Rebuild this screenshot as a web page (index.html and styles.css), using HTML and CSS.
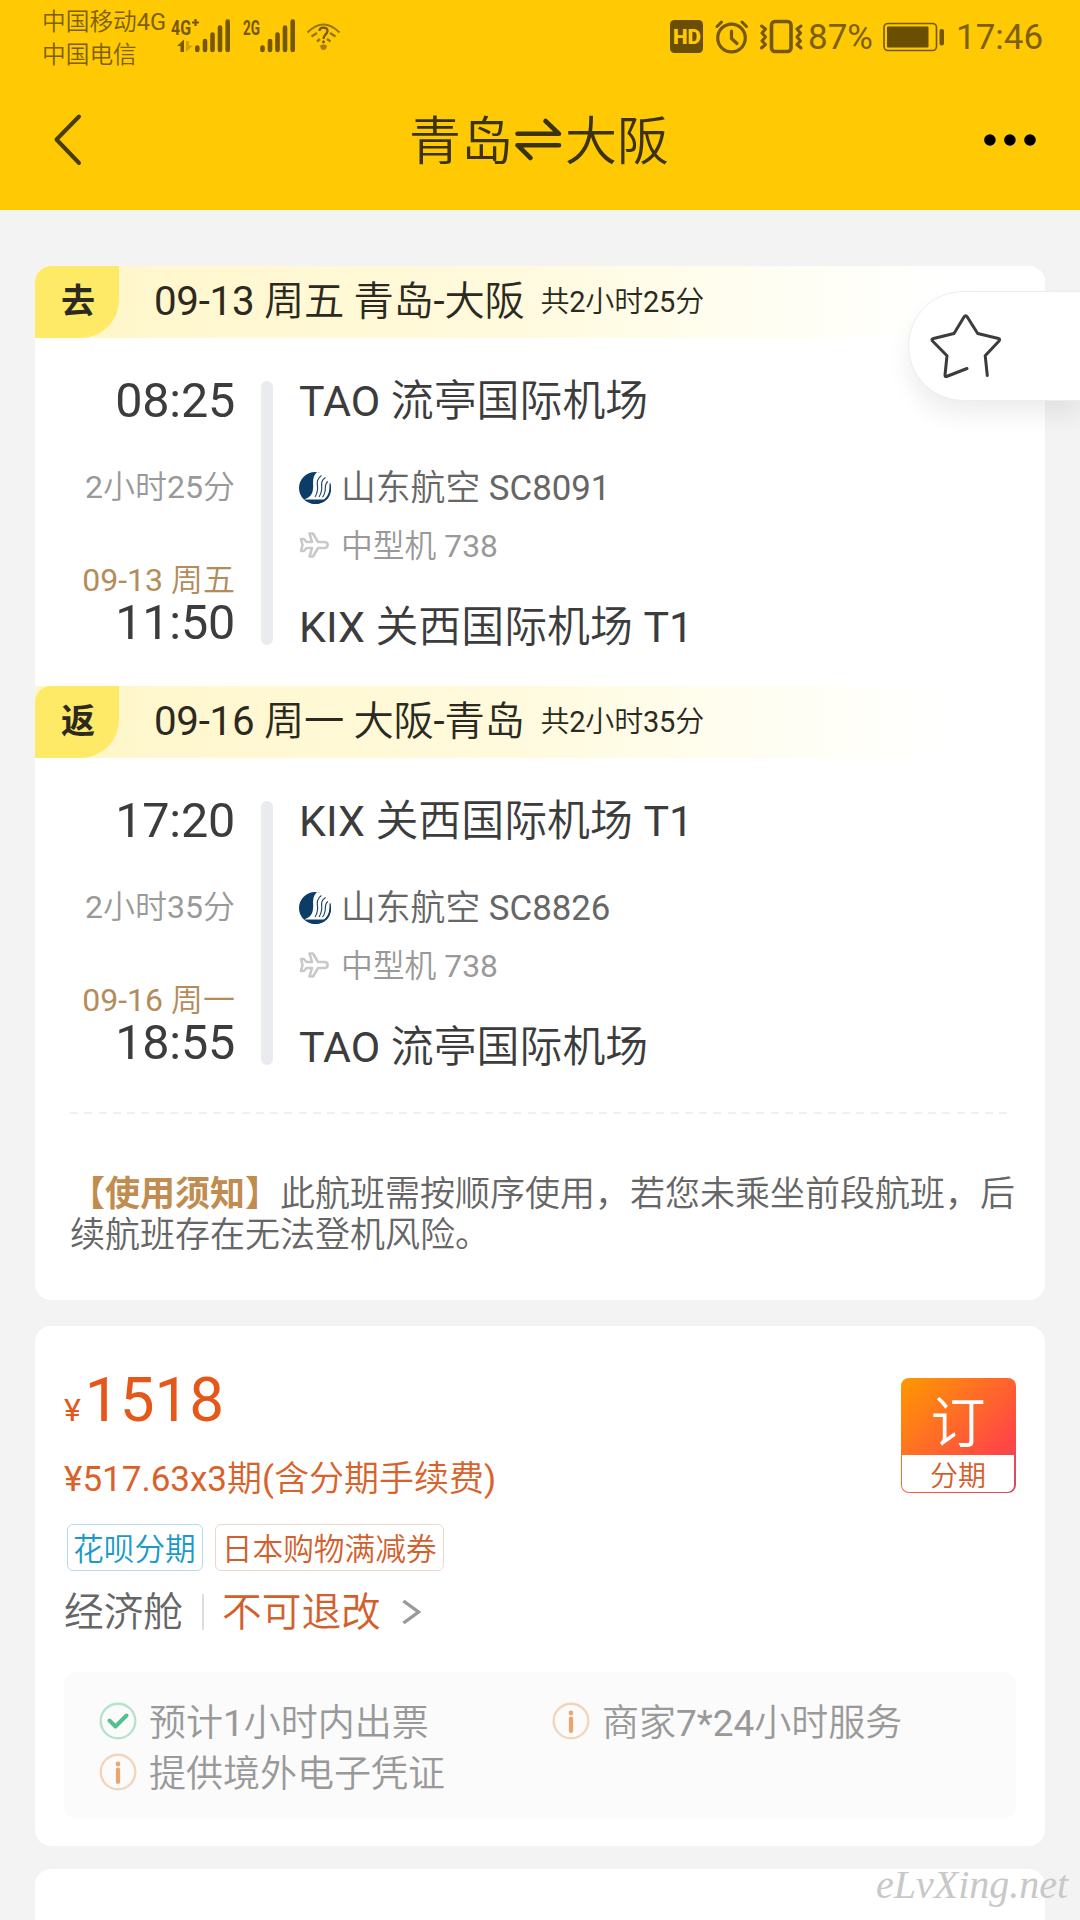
FILE: index.html
```html
<!DOCTYPE html>
<html lang="zh-CN">
<head>
<meta charset="utf-8">
<title>青岛⇌大阪</title>
<link rel="stylesheet" href="styles.css">
</head>
<body>
<svg class="defs" width="0" height="0" aria-hidden="true">
  <symbol id="airline" viewBox="0 0 32 32">
    <circle cx="16" cy="16" r="16" fill="#0d3c66"/>
    <path d="M18 0 C12 6 15 12 14 17 C13.500 23 10 26 5 27.500 L25 27.500 C29 24 31 20 30.500 12 L32 8 L27 2 Z" fill="#fff"/>
    <path d="M7 28 L25 28 C29 25 31 21 31 11 C33.500 19 31 26 25.500 29.500 C20 33 12 33 7 28 Z" fill="#0d3c66"/>
    <path d="M22.500 3.500 C15.500 8 19.500 14 18.500 18 C18 21.500 17.500 23 16 25 M26.500 5.500 C20.500 9 23.500 14 22.500 18.500 C22 21.500 21.500 23 20 25 M29 9.500 C25 12 27 16 26 19.500 C25.500 22 25 23.500 23.500 25" fill="none" stroke="#24496d" stroke-width="1.200"/>
  </symbol>
  <symbol id="plane" viewBox="0 0 30 26">
    <path d="M10.500 1.500 L14 1.500 L19 10 L26 10 C29.500 10.500 29.500 15.500 26 16 L19 16 L14 24.500 L10.500 24.500 L13 16 L7.500 16 L5 19 L2 19 L3.500 13 L2 7 L5 7 L7.500 10 L13 10 Z" fill="none" stroke="#c9c9c9" stroke-width="2.600" stroke-linejoin="round"/>
  </symbol>
  <symbol id="info" viewBox="0 0 38 38">
    <circle cx="19" cy="19" r="17.300" fill="none" stroke="#f3d5bb" stroke-width="2.400"/>
    <circle cx="19" cy="11" r="2.400" fill="#e5a878"/>
    <path d="M19 16.500 V29" stroke="#eaa46c" stroke-width="4.200" stroke-linecap="round"/>
  </symbol>
  <symbol id="check" viewBox="0 0 38 38">
    <circle cx="19" cy="19" r="17.300" fill="none" stroke="#b5e3cc" stroke-width="2.400"/>
    <path d="M10.500 18.500 L16.500 24.500 L27.500 13.500" fill="none" stroke="#55c08f" stroke-width="4" stroke-linecap="round" stroke-linejoin="round"/>
  </symbol>
</svg>
<div class="page">
  <header class="top">
    <div class="status">
      <div class="carriers"><span>中国移动4G</span><span>中国电信</span></div>
      <svg class="signals" width="176" height="40" viewBox="168 16 176 40">
        <g fill="#765704">
          <text class="net" x="171" y="34.500" textLength="20" lengthAdjust="spacingAndGlyphs">4G</text>
          <path d="M192 22.500 h7 M195.500 19 v7" stroke="#765704" stroke-width="2.200"/>
          <text class="net" x="243" y="34.500" textLength="17" lengthAdjust="spacingAndGlyphs">2G</text>
          <path d="M177 46 L184 39.500 V52 H180.500 V46 Z"/>
          <path d="M186 41 H189 V45.500 H193 L186 52 Z" opacity=".35"/>
        </g>
        <g stroke="#765704" stroke-width="4.600" stroke-linecap="round">
          <path d="M197.300 47.500V50M205 41V50M212.500 34.500V50M220 27.500V50M227.700 21.500V50"/>
          <path d="M262.500 47.500V50M270 41V50M277.500 34.500V50M285 27.500V50M292.700 21.500V50"/>
        </g>
        <g fill="none" stroke="#765704">
          <path d="M307.500 32.500 Q323.500 16.500 339.500 32.500" stroke-width="2" opacity=".75"/>
          <path d="M311.500 36.500 L317 33 M335.500 36.500 L330 33 M317 41.500 L320 39 M330.500 41.500 L327 39" stroke-width="2.400" opacity=".75"/>
          <path d="M319.500 31 C319.500 26.500 327.500 26.500 327.500 31 C327.500 34.500 323.500 34.500 323.500 39" stroke-width="2.300"/>
          <circle cx="323.500" cy="42" r="1.400" fill="#765704" stroke="none"/>
          <path d="M320 45.500 Q323.500 43.500 327 45.500 Q326.500 50 323.500 50 Q320.500 50 320 45.500Z" fill="#a87e05" stroke="none"/>
        </g>
      </svg>
      <svg class="modes" width="134" height="40" viewBox="669 16 134 40">
        <rect x="670" y="20" width="33" height="33" rx="4.500" fill="#6a4f02"/>
        <text class="hd" x="673" y="44" textLength="28" lengthAdjust="spacingAndGlyphs">HD</text>
        <g fill="none" stroke="#765704" stroke-linecap="round">
          <circle cx="731.500" cy="38" r="13.800" stroke-width="3.200"/>
          <path d="M731.500 31 V38.500 L737 43.500" stroke-width="3.200"/>
          <path d="M717 26.500 L721.500 22 M746.500 26.500 L742 22" stroke-width="3"/>
          <rect x="771.500" y="21.500" width="19.500" height="30" rx="3.500" stroke-width="3.600"/>
          <path d="M761.500 26 L765.500 29 L762 33 L765.500 37 L762 41 L765.500 44.500 L761.500 48 M801 26 L797 29 L800.500 33 L797 37 L800.500 41 L797 44.500 L801 48" stroke-width="3" stroke-linejoin="round"/>
        </g>
      </svg>
      <span class="percent">87%</span>
      <svg class="battery" width="62" height="30" viewBox="883.500 21.500 62 30">
        <rect x="884.500" y="23" width="52.500" height="27" rx="4" fill="none" stroke="#765704" stroke-width="1.600"/>
        <rect x="887.500" y="26" width="41.500" height="21" rx="1" fill="#6a4f02"/>
        <rect x="940" y="28.500" width="4.500" height="16.500" rx="2" fill="#765704"/>
      </svg>
      <span class="clock">17:46</span>
    </div>
    <div class="nav">
      <svg width="40" height="60" viewBox="50 110 40 60"><path d="M80 116.500 L57.500 139.500 L80 163" fill="none" stroke="#4a3c08" stroke-width="4" stroke-linecap="round" stroke-linejoin="round"/></svg>
      <h1 class="title"><span>青岛</span><svg width="52" height="52" viewBox="515 114 52 52"><path d="M519.500 133.800 H561 L547.500 121 M561 145.200 H519.500 L532.500 158" fill="none" stroke="#3a3210" stroke-width="4.600" stroke-linecap="round" stroke-linejoin="round"/></svg><span>大阪</span></h1>
      <svg width="54" height="14" viewBox="983.500 132 54 14"><g fill="#000"><circle cx="990.400" cy="139" r="5.800"/><circle cx="1010.400" cy="139" r="5.800"/><circle cx="1030.500" cy="139" r="5.800"/></g></svg>
    </div>
  </header>

  <main class="cards">
    <section class="card trip">
      <div class="leg-head"><b class="badge">去</b><span class="route">09-13 周五 青岛-大阪</span><span class="total">共2小时25分</span></div>
      <div class="leg">
        <div class="when"><div class="time">08:25</div><div class="dur">2小时25分</div><div class="date">09-13 周五</div><div class="time">11:50</div></div>
        <div class="rail"></div>
        <div class="where">
          <div class="port">TAO 流亭国际机场</div>
          <div class="airline"><svg width="32" height="32"><use href="#airline"/></svg><span>山东航空 SC8091</span></div>
          <div class="craft"><svg width="30" height="26"><use href="#plane"/></svg><span>中型机 738</span></div>
          <div class="port">KIX 关西国际机场 T1</div>
        </div>
      </div>
      <div class="leg-head"><b class="badge">返</b><span class="route">09-16 周一 大阪-青岛</span><span class="total">共2小时35分</span></div>
      <div class="leg">
        <div class="when"><div class="time">17:20</div><div class="dur">2小时35分</div><div class="date">09-16 周一</div><div class="time">18:55</div></div>
        <div class="rail"></div>
        <div class="where">
          <div class="port">KIX 关西国际机场 T1</div>
          <div class="airline"><svg width="32" height="32"><use href="#airline"/></svg><span>山东航空 SC8826</span></div>
          <div class="craft"><svg width="30" height="26"><use href="#plane"/></svg><span>中型机 738</span></div>
          <div class="port">TAO 流亭国际机场</div>
        </div>
      </div>
      <div class="divider"></div>
      <p class="notice"><b>【使用须知】</b>此航班需按顺序使用，若您未乘坐前段航班，后续航班存在无法登机风险。</p>
    </section>

    <section class="card fare">
      <div class="offer">
        <div class="details">
          <div class="price"><small>¥</small>1518</div>
          <div class="instal">¥517.63x3期(含分期手续费)</div>
          <div class="tags"><span class="tag blue">花呗分期</span><span class="tag">日本购物满减券</span></div>
          <div class="cabin"><span>经济舱</span><i></i><span class="rule">不可退改</span><svg width="20" height="28" viewBox="401 1598 20 28"><path d="M403.500 1601 L418.500 1612 L403.500 1623" fill="none" stroke="#999" stroke-width="3.400"/></svg></div>
        </div>
        <div class="book"><span class="book-main">订</span><span class="book-sub">分期</span></div>
      </div>
      <div class="perks">
        <div><svg width="38" height="38"><use href="#check"/></svg><span>预计1小时内出票</span></div>
        <div><svg width="38" height="38"><use href="#info"/></svg><span>商家7*24小时服务</span></div>
        <div><svg width="38" height="38"><use href="#info"/></svg><span>提供境外电子凭证</span></div>
      </div>
    </section>

    <section class="card next"></section>
  </main>

  <div class="fav"><svg width="76" height="70" viewBox="928 311 76 70"><path d="M967 368.500 L946.500 376.500 Q945 377 945 375 L947 355.700 L932.500 341 Q931 339 933.500 338.500 L954 333.500 L964 317 Q965.600 314.500 967.300 317 L977.700 333.500 L998.500 338.500 Q1000.500 339 999 341 L985.200 355.700 L987.300 375.500" fill="none" stroke="#3c3c3c" stroke-width="3" stroke-linecap="round" stroke-linejoin="round"/></svg></div>
  <div class="mark">eLvXing.net</div>
</div>
</body>
</html>
```
FILE: styles.css
```css
* { box-sizing: border-box; }
body { margin: 0; background: #f3f3f3; }
.defs { position: absolute; }
svg { display: block; flex: none; }
.page {
  position: relative;
  width: 1080px;
  height: 1920px;
  overflow: hidden;
  background: #f3f3f3;
  color: #3c3c3c;
  font-family: Roboto, "Noto Sans CJK SC DemiLight", "Noto Sans CJK SC Light", "Noto Sans CJK SC", sans-serif;
  font-weight: 400;
  white-space: nowrap;
  text-spacing-trim: space-all;
}

/* header */
.top { height: 210px; background: #ffca03; }
.status { display: flex; height: 76px; padding: 0 36px 0 42px; color: #7d5f05; }
.carriers { display: flex; flex-direction: column; width: 126px; padding-top: 6px; font-size: 23.700px; line-height: 33px; }
.signals { margin-top: 16px; }
.net { font: 700 20px Roboto, sans-serif; }
.modes { margin: 16px 0 0 auto; }
.hd { font: 900 21px Roboto, sans-serif; fill: #ffca03; }
.percent, .clock { font-size: 35px; line-height: 76px; }
.percent { width: 65px; margin-left: 5px; }
.battery { margin: 21.500px 0 0 10px; }
.clock { width: 88px; margin-left: 11px; }
.nav { display: flex; align-items: center; justify-content: space-between; height: 128px; padding: 0 43px 0 49px; }
.title { display: flex; align-items: center; margin: 0 0 0 6px; font-size: 52px; line-height: 60px; font-weight: 400; color: #3a3210; }
.title span { padding-top: 5px; }

/* cards */
.cards { display: flex; flex-direction: column; padding: 56px 35px 0; }
.card { border-radius: 16px; background: #fff; overflow: hidden; }
.trip { height: 1034px; }
.leg-head { display: flex; align-items: center; height: 72px; color: #2c2a20; background: linear-gradient(90deg, #fff6c8 0%, #fffadc 45%, #fffef4 75%, #fff 90%); }
.badge { width: 84px; height: 72px; border-radius: 16px 0 38px 0; background: #ffea67; font-family: Roboto, "Noto Sans CJK SC", sans-serif; font-size: 34px; line-height: 70px; text-align: center; padding-left: 2px; }
.route { margin-left: 35px; font-size: 40.300px; line-height: 72px; letter-spacing: -.3px; }
.total { margin-left: 16px; font-size: 29px; line-height: 74px; letter-spacing: -.2px; }
.leg { display: flex; height: 348px; padding-top: 40px; }
.when { width: 200px; text-align: right; }
.time { padding-top: 1px; height: 44px; font-size: 48.500px; line-height: 44px; letter-spacing: -.2px; }
.dur { margin: 45px 0 53px; font-size: 32px; line-height: 40px; color: #999; }
.date { font-size: 32px; line-height: 40px; color: #b48c5a; }
.rail { width: 12px; height: 264px; margin: 3px 27px 0 26px; border-radius: 6px; background: #e9ebef; }
.port { margin-left: -1px; padding-top: 1px; height: 44px; font-size: 42.900px; line-height: 44px; }
.airline, .craft { display: flex; align-items: center; height: 40px; line-height: 40px; }
.airline { gap: 10px; margin: 46px 0 17px -1px; font-size: 34.800px; color: #666; }
.craft { gap: 12px; margin: 0 0 39px -1px; font-size: 31.800px; color: #999; }
.craft span { padding-top: 1px; }
.divider { height: 2px; margin: 6px 35px 0; background: repeating-linear-gradient(90deg, #f0f0f0 0 8px, transparent 8px 14.300px); }
.notice { width: 950px; margin: 60px 0 0 35px; font-size: 35px; line-height: 41px; color: #666; white-space: normal; }
.notice b { color: #c08c50; font-family: Roboto, "Noto Sans CJK SC", sans-serif; }

/* fare */
.fare { height: 520px; margin-top: 26px; padding: 0 29px; }
.offer { display: flex; justify-content: space-between; height: 346px; }
.price { height: 60px; margin-top: 44px; font-size: 62px; line-height: 60px; color: #e5581a; }
.price small { margin-right: 4px; font-size: 32px; }
.instal { height: 42px; margin-top: 29px; font-size: 35px; line-height: 42px; color: #d9622a; }
.tags { display: flex; gap: 12px; margin: 23px 0 0 3px; }
.tag { height: 47px; padding: 0 6px 0 6px; border: 1px solid #ecd7cf; border-radius: 6px; font-size: 30.700px; line-height: 50px; color: #d3602c; }
.tag.blue { padding: 0 6px 0 5px; border-color: #b4dcea; color: #1b9aca; }
.cabin { display: flex; align-items: center; height: 46px; margin-top: 18px; font-size: 39.700px; line-height: 46px; color: #666; }
.cabin span { padding-top: 2px; }
.cabin i { width: 2px; height: 36px; margin: 0 18px 0 19px; background: #ddd; }
.cabin svg { margin-left: 20px; }
.rule { color: #d3602c; }
.book { display: flex; flex-direction: column; width: 115px; height: 115px; margin-top: 52px; padding: 0 2px 1px 1px; border-radius: 8px; background: linear-gradient(135deg, #ff9900, #ff4646 75%, #c8506a); text-align: center; }
.book-main { flex: none; height: 77px; font-size: 55px; line-height: 91px; color: #fff; }
.book-sub { height: 37px; border-radius: 0 0 7px 7px; background: #fff; font-size: 28px; line-height: 44px; color: #d3602c; overflow: hidden; }
.perks { display: grid; grid-template-columns: 453px 1fr; align-content: start; height: 147px; padding: 23px 0 0 35px; border-radius: 14px; background: #fbfbfb; font-size: 37px; color: #999; }
.perks div { display: flex; align-items: center; gap: 12px; height: 51px; line-height: 51px; }
.perks span { padding-top: 5px; }
.next { height: 60px; margin-top: 23px; border-radius: 16px 16px 0 0; }

/* overlays */
.fav { position: absolute; top: 291px; right: -1px; width: 173px; height: 110px; padding: 19px 0 0 19px; border: 1px solid #ebedf0; border-radius: 55px 0 0 55px; background: #fff; box-shadow: 0 14px 24px rgba(0, 0, 0, .07); }
.mark { position: absolute; left: 876px; top: 1861px; font: italic 40px/48px "Liberation Serif", serif; color: #c8c8c8; }
```
